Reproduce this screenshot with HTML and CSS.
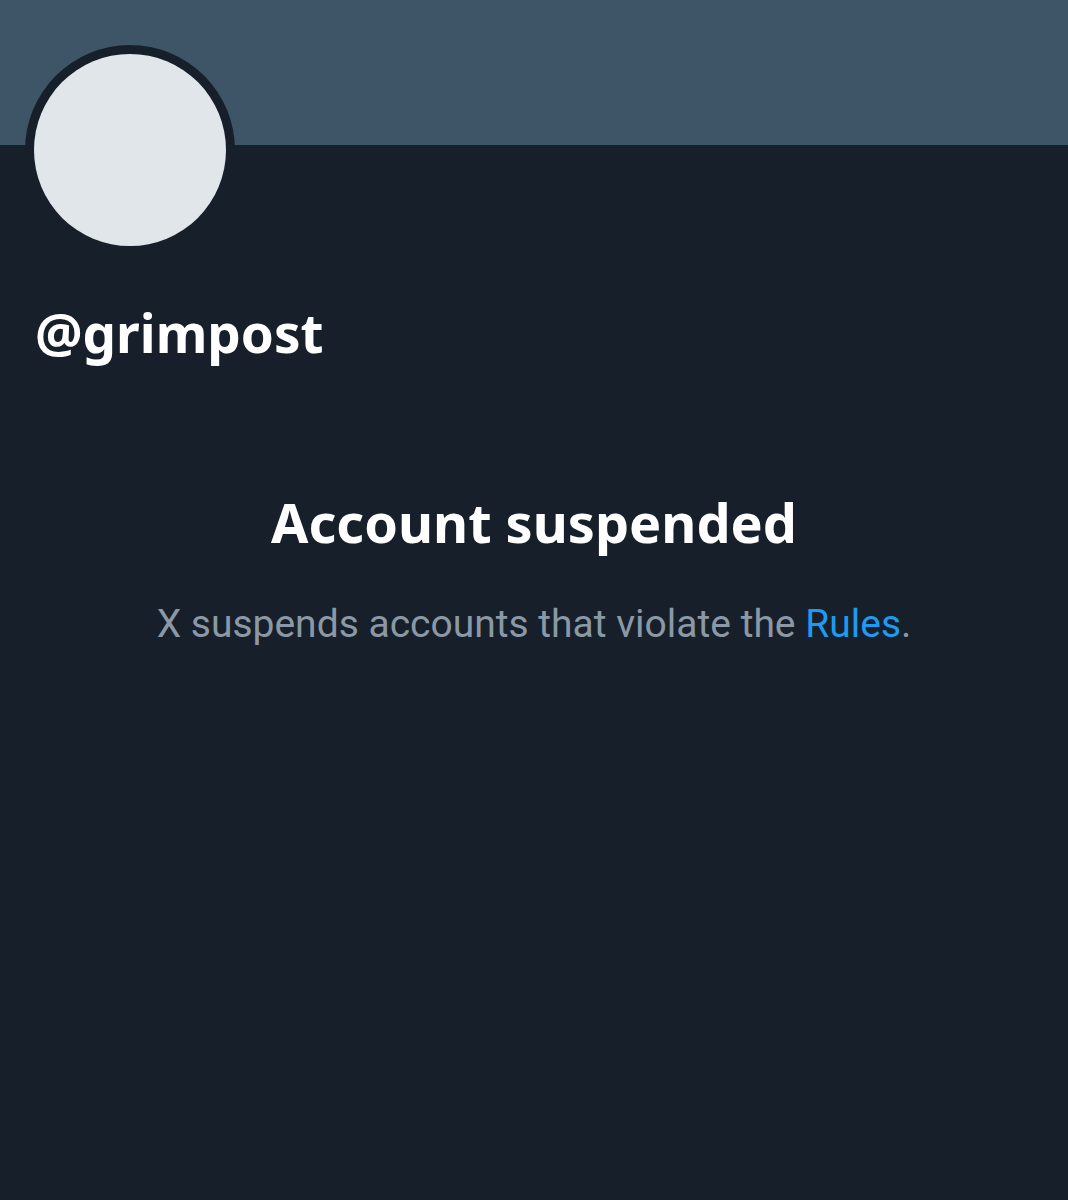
FILE: index.html
```html
<!DOCTYPE html>
<html lang="en">
<head>
  <meta charset="UTF-8">
  <meta name="viewport" content="width=device-width, initial-scale=1.0">
  <title>@grimpost</title>
  <link rel="stylesheet" href="styles.css">
</head>
<body>
  <div class="profile">
    <div class="banner"></div>
    <div class="head">
      <div class="avatar"><div class="avatar-inner"></div></div>
      <div class="handle">@grimpost</div>
    </div>
    <div class="notice">
      <h1 class="title">Account suspended</h1>
      <p class="text">X suspends accounts that violate the <a href="#" class="rules">Rules</a>.</p>
    </div>
  </div>
</body>
</html>
```

FILE: styles.css
```css
html, body {
  margin: 0;
  padding: 0;
  background-color: #17202a;
}

body {
  font-family: "Noto Sans", "Open Sans", sans-serif;
}

.profile {
  width: 1068px;
  min-height: 1200px;
}

.banner {
  height: 145px;
  background-color: #3e5568;
}

.head {
  padding: 0 35px;
}

.avatar {
  width: 210px;
  height: 210px;
  margin: -100px 0 0 -10px;
  border-radius: 50%;
  background-color: #17202a;
  display: flex;
  align-items: center;
  justify-content: center;
}

.avatar-inner {
  width: 192px;
  height: 192px;
  border-radius: 50%;
  background-color: #e1e6ea;
}

.handle {
  margin-top: 48px;
  color: #fff;
  font-weight: 700;
  font-size: 53px;
  line-height: 60px;
}

.notice {
  margin-top: 128px;
  text-align: center;
}

.title {
  margin: 0;
  color: #fff;
  font-size: 54px;
  font-weight: 700;
  line-height: 62px;
}

.text {
  margin: 46px 0 0;
  color: #8b98a5;
  font-family: Roboto, "Noto Sans", sans-serif;
  font-size: 39px;
  line-height: 50px;
}

.rules {
  color: #1d9bf0;
  text-decoration: none;
}
```
